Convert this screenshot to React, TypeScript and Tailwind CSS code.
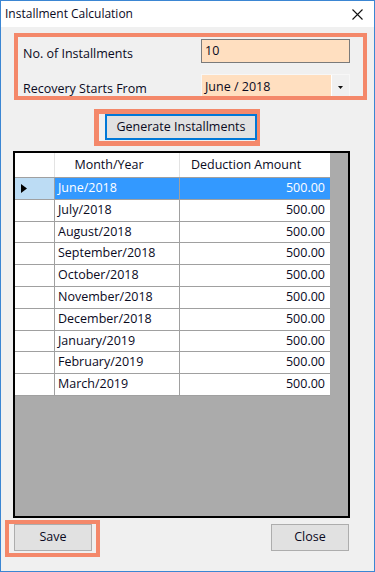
import React from "react";

const rows = [
  "June/2018",
  "July/2018",
  "August/2018",
  "September/2018",
  "October/2018",
  "November/2018",
  "December/2018",
  "January/2019",
  "February/2019",
  "March/2019",
];

const font = { fontFamily: '"Open Sans", "Noto Sans", sans-serif' };

export default function App() {
  return (
    <div
      className="w-[375px] h-[572px] border border-[#3b86d3] bg-[#f0f0f0] flex flex-col text-[#0a0a1e] overflow-hidden"
      style={font}
    >
      {/* Title bar */}
      <div className="h-[26px] bg-white flex items-center justify-between pl-[4px] pr-[10px] shrink-0">
        <span className="text-[12px] leading-none">Installment Calculation</span>
        <svg width="11" height="11" viewBox="0 0 11 11" className="mr-[1px]">
          <path d="M0.5 0.5 L10.5 10.5 M10.5 0.5 L0.5 10.5" stroke="#111" strokeWidth="1.1" fill="none" />
        </svg>
      </div>

      {/* Input group */}
      <div className="mt-[6px] ml-[13px] w-[353px] h-[67px] border-4 border-[#f4886a] overflow-hidden flex flex-col shrink-0">
        <div className="flex items-start mt-[2px] h-[24px]">
          <span className="ml-[5px] text-[12.5px] w-[178px] mt-[6px]">No. of Installments</span>
          <div className="w-[149px] h-[24px] border border-[#7a7a7a] bg-[#ffdfc0] flex items-center pl-[3px] text-[12.5px]">
            10
          </div>
        </div>
        <div className="flex items-start mt-[11px]">
          <span className="ml-[5px] text-[12.5px] w-[178px] mt-[6px]">Recovery Starts From</span>
          <div className="w-[149px] h-[26px] border border-[#f7f7f7] bg-[#ffdfc0] flex items-center text-[12.5px]">
            <span className="pl-[3px] flex-1">June / 2018</span>
            <div className="w-[18px] h-full bg-[#f0f0f0] border-l border-[#ffffff] flex items-center justify-center">
              <svg width="5" height="3" viewBox="0 0 5 3">
                <path d="M0 0 H5 L2.5 3 Z" fill="#111" />
              </svg>
            </div>
          </div>
        </div>
      </div>

      {/* Generate button */}
      <div className="mt-[9px] ml-[93px] w-[166px] h-[37px] border-[5px] border-[#f4886a] shrink-0 flex">
        <button className="ml-[6px] -mr-[3px] w-[152px] h-[26px] border-2 border-[#0078d7] bg-[#e1e1e1] text-[12.5px] flex items-center justify-center">
          Generate Installments
        </button>
      </div>

      {/* Grid */}
      <div className="mt-[5px] ml-[12px] w-[337px] h-[367px] border-2 border-[#000] bg-[#ababab] shrink-0 flex flex-col items-start text-[12.5px]">
        <div className="flex h-[25px] bg-white border-b border-[#a0a0a0]">
          <div className="w-[40px] border-r border-[#e3e3e3]" />
          <div className="w-[125px] border-r border-[#e3e3e3] flex items-center justify-center pr-[16px]">
            Month/Year
          </div>
          <div className="w-[150px] flex items-center justify-center pr-[18px]">Deduction Amount</div>
        </div>
        {rows.map((m, i) => {
          const sel = i === 0;
          return (
            <div key={m} className="flex h-[21.8px]">
              <div
                className={
                  "w-[40px] border-r border-b border-[#a0a0a0] flex items-center pl-[6px] " +
                  (sel ? "bg-[#bcdcf4]" : "bg-white")
                }
              >
                {sel && (
                  <svg width="6" height="9" viewBox="0 0 6 9">
                    <path d="M0 0 L6 4.5 L0 9 Z" fill="#000" />
                  </svg>
                )}
              </div>
              <div
                className={
                  "w-[125px] border-r border-b border-[#a0a0a0] flex items-center pl-[3px] " +
                  (sel ? "bg-[#3399ff] text-white" : "bg-white")
                }
              >
                {m}
              </div>
              <div
                className={
                  "w-[150px] border-b border-[#a0a0a0] flex items-center justify-end pr-[5px] " +
                  (sel ? "bg-[#3399ff] text-white" : "bg-white")
                }
              >
                500.00
              </div>
            </div>
          );
        })}
      </div>

      {/* Bottom buttons */}
      <div className="flex items-start mt-[2px] shrink-0">
        <div className="ml-[4px] w-[95px] h-[37px] border-4 border-[#f4886a] flex">
          <button className="ml-[5px] w-[78px] h-[27px] border border-[#adadad] bg-[#e1e1e1] text-[12.5px] flex items-center justify-center">
            Save
          </button>
        </div>
        <button className="ml-auto mr-[25px] mt-[4px] w-[78px] h-[27px] border border-[#adadad] bg-[#e1e1e1] text-[12.5px] flex items-center justify-center">
          Close
        </button>
      </div>
    </div>
  );
}
